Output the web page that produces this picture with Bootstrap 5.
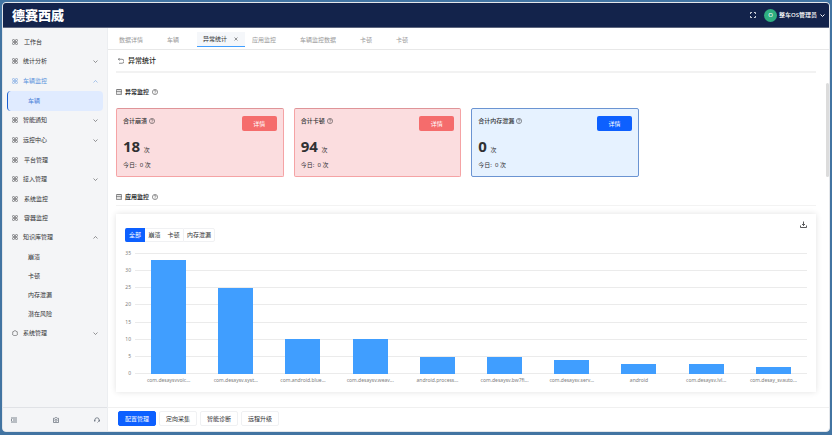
<!DOCTYPE html>
<html lang="zh-CN">
<head>
<meta charset="utf-8">
<meta name="viewport" content="width=device-width, initial-scale=1">
<title>异常统计</title>
<link href="https://cdn.jsdelivr.net/npm/bootstrap@5.3.0/dist/css/bootstrap.min.css" rel="stylesheet">
<style>
body{background:#4274a2;font-family:"Noto Sans","Noto Sans CJK SC",sans-serif;font-size:6px;line-height:10px;color:#303133;padding:2px}
svg{fill:none;stroke:currentColor;flex:none;display:block}
.ic{width:6px;height:6px}
.chev{width:5px;height:5px}
.frame{height:calc(100vh - 5px);border:1px solid #e3e6ea;border-radius:4px;background:#fff}
.topbar{height:25px;flex:none;background:#13234b;color:#fff;padding:0 4px 0 9px;border-bottom:1px solid #5d667e}
.brand{font-size:13px;line-height:20px;font-weight:900}
.avatar{width:13px;height:13px;border-radius:50%;background:#2fae80;margin-right:2px}
.topbar .user{gap:3px;font-weight:500}
.side{width:105px;background:#f4f5f7;border-right:1px solid #eceef1}
.side nav{padding:4px 4px 0}
.side a{display:flex;align-items:center;gap:5px;height:19px;padding:0 5px;color:#303133;text-decoration:none}
.side a.group{height:20px}
.side a.leaf{gap:6px}
.side a.sub{padding-left:21px}
.side a.open{color:#5b93dc}
.side a.current{height:20px;margin-bottom:-1px;background:#e0ebff;border-radius:4px;color:#4a80d8;border-left:1px solid #1b5fd0;padding-left:20px}
.tools{height:24px;border-top:1px solid #e0e2e6;padding:0 7px 0 8px;color:#56606e}
.plain{border:0;background:none;padding:0;color:inherit;font-size:6px;line-height:10px}
.tabs{height:22px;border-bottom:1px solid #e8e8e8;padding:4px 0 0 11px;gap:24px}
.tabs a{height:15px;color:#999;text-decoration:none;display:flex;align-items:center}
.tabs a.on{background:#f5f7fa;color:#303133;border-bottom:1px solid #409eff;gap:7px;padding:0 7px 0 6px;margin:0 -17px 0 -6px}
.tabs .x{width:4px;height:4px}
.pagehead{height:23px;margin:0 13px 0 8px;border-bottom:2px solid #f2f2f2;padding-left:2px;font-size:7px;font-weight:500;color:#1d1e20}
.content{padding:14px 13px 14px 8px}
.sect{gap:3px;font-size:6px;line-height:10px;font-weight:600;margin:0}
.sect.rule{padding-bottom:3px;border-bottom:1px solid #f3f3f3;margin-bottom:8px}
.stats{margin:11px 177px 15px 0;gap:10px}
.stat{flex:1 1 0;height:69px;border:1px solid #f5a3a5;border-top-color:#df9498;border-radius:2px;background:#fbdddf;padding:7px 6px 5px}
.stat.info{background:#e6f2ff;border-color:#6b94d2}
.stat .go{width:35px;height:15px;border:0;border-radius:2px;background:#f56c6c;color:#fff;font-size:6px;line-height:10px;padding:0}
.stat.info .go{background:#0d60ff}
.stat .name{gap:2px;font-weight:500}
.count{margin:10px 0 4px}
.num{font-size:15px;line-height:20px;font-weight:700;margin-right:2px}
.panel{background:#fff;box-shadow:0 0 6px rgba(0,0,0,.12);padding:7px 9px 7px 9px}
.seg button,.acts button{border:1px solid #f0f1f3;background:#fff;color:#303133;font-size:6px;line-height:10px}
.seg button{height:14px;padding:0 3px;border-width:1px 0;min-width:19px}
.seg button:first-child{border-radius:2px 0 0 2px;width:20px}
.seg button:last-child{border-width:1px;padding:0 3px;border-radius:0 2px 2px 0}
.seg button.on,.acts button.on{background:#0d60ff;border-color:#0d60ff;color:#fff}
.plot{display:grid;grid-template-columns:6px 1fr;column-gap:4px;margin-top:11px;color:#808080;font-size:5px}
.axis,.lines{grid-row:1;display:flex;flex-direction:column;justify-content:space-between}
.axis{line-height:6px;text-align:right;margin:-3px 0 -2px}
.lines,.bars{grid-column:2;grid-row:1}
.lines i{height:1px;background:#ebebeb}
.bars,.names{display:grid;grid-template-columns:repeat(10,1fr)}
.bars{height:121px;align-items:end;justify-items:center}
.bars b{width:35px;background:#409eff}
.names{grid-column:2;text-align:center;padding-top:1px}
.acts{height:24px;border-top:1px solid #f0f0f0;padding:3px 10px;gap:3px}
.acts button{height:15px;padding:0 6px;border-radius:2px}
.thumb{position:absolute;right:0;top:55px;width:3px;height:94px;background:#dcdcdc;border-radius:2px}
</style>
<script src="https://cdn.jsdelivr.net/npm/bootstrap@5.3.0/dist/js/bootstrap.bundle.min.js"></script>
</head>
<body>
<svg class="d-none">
<symbol id="menu" viewBox="0 0 12 12"><circle cx="3" cy="3" r="2.2"/><circle cx="9" cy="3" r="2.2"/><circle cx="3" cy="9" r="2.2"/><circle cx="9" cy="9" r="2.2"/><path d="M4.500 4.500l3 3M7.500 4.500l-3 3"/></symbol>
<symbol id="down" viewBox="0 0 10 10"><path d="M1 3l4 4 4-4"/></symbol>
<symbol id="up" viewBox="0 0 10 10"><path d="M1 7l4-4 4 4"/></symbol>
<symbol id="help" viewBox="0 0 12 12"><circle cx="6" cy="6" r="5.2"/><path d="M4.3 4.6c0-2.4 3.5-2.2 3.5 0 0 1.4-1.8 1.4-1.8 2.8M6 8.4v1.2"/></symbol>
<symbol id="list" viewBox="0 0 12 12"><path d="M1 1h10v10H1zM1 5h10M3 8h2M7 8h3M4 0v3M8 0v3"/></symbol>
</svg>
<div class="frame d-flex flex-column overflow-hidden">
<header class="topbar d-flex align-items-center">
<span class="brand me-auto">德赛西威</span>
<button class="plain me-2" aria-label="全屏"><svg class="ic" viewBox="0 0 12 12" stroke-width="1.6"><path d="M1 4V1h3M8 1h3v3M11 8v3H8M4 11H1V8"/></svg></button>
<span class="avatar d-flex align-items-center justify-content-center">O</span>
<button class="plain user d-flex align-items-center">整车OS管理员<svg class="chev" viewBox="0 0 10 10" stroke-width="2"><path d="M1 3l4 4 4-4"/></svg></button>
</header>
<div class="d-flex flex-grow-1">
<aside class="side d-flex flex-column flex-shrink-0">
<nav class="flex-grow-1">
<a class="leaf" href="#"><svg class="ic"><use href="#menu"/></svg>工作台</a>
<a class="group" href="#"><svg class="ic"><use href="#menu"/></svg>统计分析<svg class="chev ms-auto"><use href="#down"/></svg></a>
<a class="group open" href="#"><svg class="ic"><use href="#menu"/></svg>车辆监控<svg class="chev ms-auto"><use href="#up"/></svg></a>
<a class="sub current" href="#">车辆</a>
<a class="group" href="#"><svg class="ic"><use href="#menu"/></svg>智能通知<svg class="chev ms-auto"><use href="#down"/></svg></a>
<a class="group" href="#"><svg class="ic"><use href="#menu"/></svg>远控中心<svg class="chev ms-auto"><use href="#down"/></svg></a>
<a class="leaf" href="#"><svg class="ic"><use href="#menu"/></svg>平台管理</a>
<a class="group" href="#"><svg class="ic"><use href="#menu"/></svg>接入管理<svg class="chev ms-auto"><use href="#down"/></svg></a>
<a class="leaf" href="#"><svg class="ic"><use href="#menu"/></svg>系统监控</a>
<a class="leaf" href="#"><svg class="ic"><use href="#menu"/></svg>容器监控</a>
<a class="group" href="#"><svg class="ic"><use href="#menu"/></svg>知识库管理<svg class="chev ms-auto"><use href="#up"/></svg></a>
<a class="sub" href="#">崩溃</a>
<a class="sub" href="#">卡顿</a>
<a class="sub" href="#">内存泄漏</a>
<a class="sub" href="#">潜在风险</a>
<a class="group" href="#"><svg class="ic" viewBox="0 0 12 12"><path d="M4 2.5L6 .8l2 1.7 2.5 1v3L11.3 9 8 11.2H4L.8 9l.7-2.500v-3z"/></svg>系统管理<svg class="chev ms-auto"><use href="#down"/></svg></a>
</nav>
<div class="tools d-flex align-items-center justify-content-between">
<button class="plain" aria-label="收起菜单"><svg class="ic" viewBox="0 0 12 12" stroke-width="1.5"><path d="M0 2h12M4 6h8M0 10h12M0 4.500L2 6 0 7.500"/></svg></button>
<button class="plain" aria-label="截图"><svg class="ic" viewBox="0 0 12 12" stroke-width="1.3"><path d="M1 2.500h2.500L5 1h2l1.500 1.500H11v8.500H1z"/><circle cx="6" cy="6.500" r="2.200"/></svg></button>
<button class="plain" aria-label="客服"><svg class="ic" viewBox="0 0 12 12" stroke-width="1.4"><path d="M2 8V5.500a4 4 0 0 1 8 0V8M1 5.500v3h1.500M11 5.500v3H9.500L7 11"/></svg></button>
</div>
</aside>
<main class="d-flex flex-column flex-grow-1 position-relative">
<nav class="tabs d-flex">
<a href="#">数据详情</a><a href="#">车辆</a>
<a href="#" class="on">异常统计<svg class="x" viewBox="0 0 8 8"><path d="M1 1l6 6M7 1L1 7"/></svg></a>
<a href="#">应用监控</a><a href="#">车辆监控数据</a><a href="#">卡顿</a><a href="#">卡顿</a>
</nav>
<div class="pagehead d-flex align-items-center gap-1"><button class="plain" aria-label="返回"><svg class="ic" viewBox="0 0 12 12"><path d="M3 0L.8 2.500 3 5M1 2.500h7a3.700 3.700 0 0 1 0 8H2"/></svg></button>异常统计</div>
<div class="content flex-grow-1">
<h2 class="sect d-flex align-items-center"><svg class="ic"><use href="#list"/></svg><span>异常监控</span><svg class="ic"><use href="#help"/></svg></h2>
<div class="stats d-flex">
<section class="stat d-flex justify-content-between align-items-start"><div><div class="name d-flex align-items-center">合计崩溃<svg class="ic"><use href="#help"/></svg></div><div class="count"><span class="num">18</span> 次</div><div>今日: &nbsp;0 次</div></div><button class="go">详情</button></section>
<section class="stat d-flex justify-content-between align-items-start"><div><div class="name d-flex align-items-center">合计卡顿<svg class="ic"><use href="#help"/></svg></div><div class="count"><span class="num">94</span> 次</div><div>今日: &nbsp;0 次</div></div><button class="go">详情</button></section>
<section class="stat info d-flex justify-content-between align-items-start"><div><div class="name d-flex align-items-center">合计内存泄漏<svg class="ic"><use href="#help"/></svg></div><div class="count"><span class="num">0</span> 次</div><div>今日: &nbsp;0 次</div></div><button class="go">详情</button></section>
</div>
<h2 class="sect rule d-flex align-items-center"><svg class="ic"><use href="#list"/></svg><span>应用监控</span><svg class="ic"><use href="#help"/></svg></h2>
<section class="panel">
<div class="d-flex justify-content-end"><button class="plain" aria-label="下载"><svg width="7" height="7" viewBox="0 0 14 14" stroke="#222" stroke-width="1.600"><path d="M7 1v8M4 6l3 3 3-3M1 9v4h12V9"/></svg></button></div>
<div class="seg d-flex" role="group"><button class="on">全部</button><button>崩溃</button><button>卡顿</button><button>内存泄漏</button></div>
<div class="plot">
<div class="axis"><span>35</span><span>30</span><span>25</span><span>20</span><span>15</span><span>10</span><span>5</span><span>0</span></div>
<div class="lines"><i></i><i></i><i></i><i></i><i></i><i></i><i></i><i></i></div>
<div class="bars"><b style="height:94.3%"></b><b style="height:71.4%"></b><b style="height:28.6%"></b><b style="height:28.6%"></b><b style="height:14.3%"></b><b style="height:14.3%"></b><b style="height:11.4%"></b><b style="height:8.6%"></b><b style="height:8.6%"></b><b style="height:5.7%"></b></div>
<div class="names"><span>com.desaysvvoic...</span><span>com.desaysv.syst...</span><span>com.android.blue...</span><span>com.desaysv.weav...</span><span>android.process...</span><span>com.desaysv.bw7fi...</span><span>com.desaysv.serv...</span><span>android</span><span>com.desaysv.lvl...</span><span>com.desay_svauto...</span></div>
</div>
</section>
</div>
<div class="acts d-flex align-items-start"><button class="on">配置管理</button><button>定向采集</button><button>智能诊断</button><button>远程升级</button></div>
<div class="thumb"></div>
</main>
</div>
</div>
</body>
</html>
